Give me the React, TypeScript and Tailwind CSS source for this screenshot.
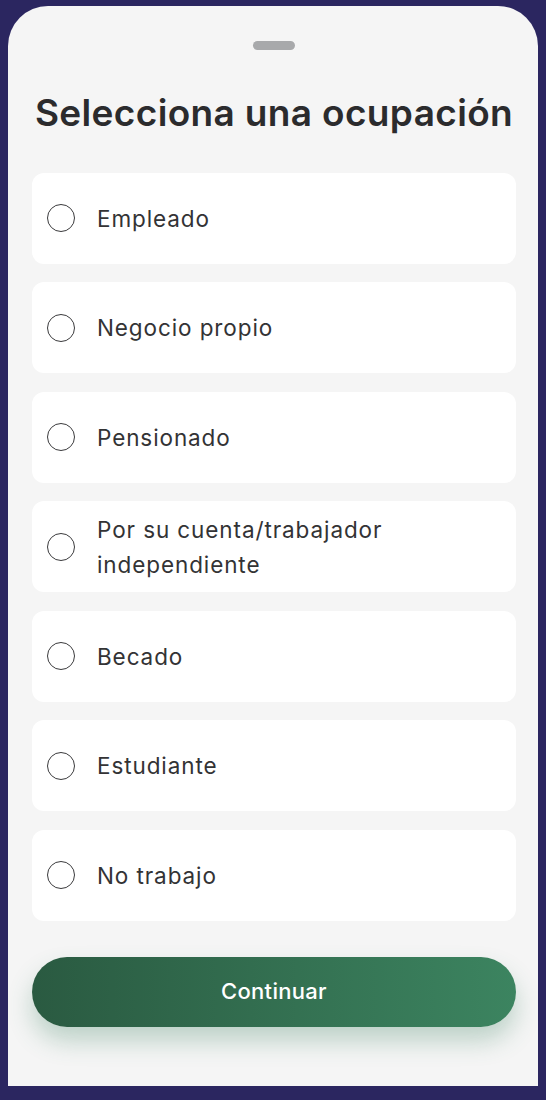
import React from "react";

const options = [
  "Empleado",
  "Negocio propio",
  "Pensionado",
  "Por su cuenta/trabajador independiente",
  "Becado",
  "Estudiante",
  "No trabajo",
];

export default function App() {
  return (
    <div
      className="w-[546px] h-[1100px] bg-[#2b2660] pt-[6px] pl-[8px] pr-[8px]"
      style={{ fontFamily: "Inter, 'Noto Sans', sans-serif" }}
    >
      <div className="w-[530px] h-[1080px] bg-[#f5f5f5] rounded-t-[40px] flex flex-col pl-[24px] pr-[22px]">
        <div className="flex justify-center pt-[35px]">
          <div className="w-[42px] h-[9px] rounded-full bg-[#a8a9ab]" />
        </div>
        <h1 className="mt-[41px] text-[37px] leading-[44px] font-semibold text-[#2b2b2d] text-center tracking-[0.35px] whitespace-nowrap">
          Selecciona una ocupación
        </h1>
        <div className="mt-[37.5px] flex flex-col gap-[18.5px]">
          {options.map((o) => (
            <div
              key={o}
              className="h-[91px] bg-white rounded-[12px] flex items-center pl-[15px] pr-[20px]"
            >
              <div className="w-[28px] h-[28px] rounded-full border-[1.75px] border-[#3a3a3c] shrink-0" />
              <div className="ml-[22px] text-[22.5px] leading-[35px] text-[#333335] tracking-[0.9px] max-w-[330px]">
                {o}
              </div>
            </div>
          ))}
        </div>
        <button className="mt-[36px] h-[70px] w-[484px] rounded-full bg-[linear-gradient(90deg,#2a5a41,#3c8460)] text-white text-[22px] font-medium tracking-[0.3px] shadow-[0_14px_24px_rgba(60,130,95,0.3)]">
          Continuar
        </button>
      </div>
    </div>
  );
}
